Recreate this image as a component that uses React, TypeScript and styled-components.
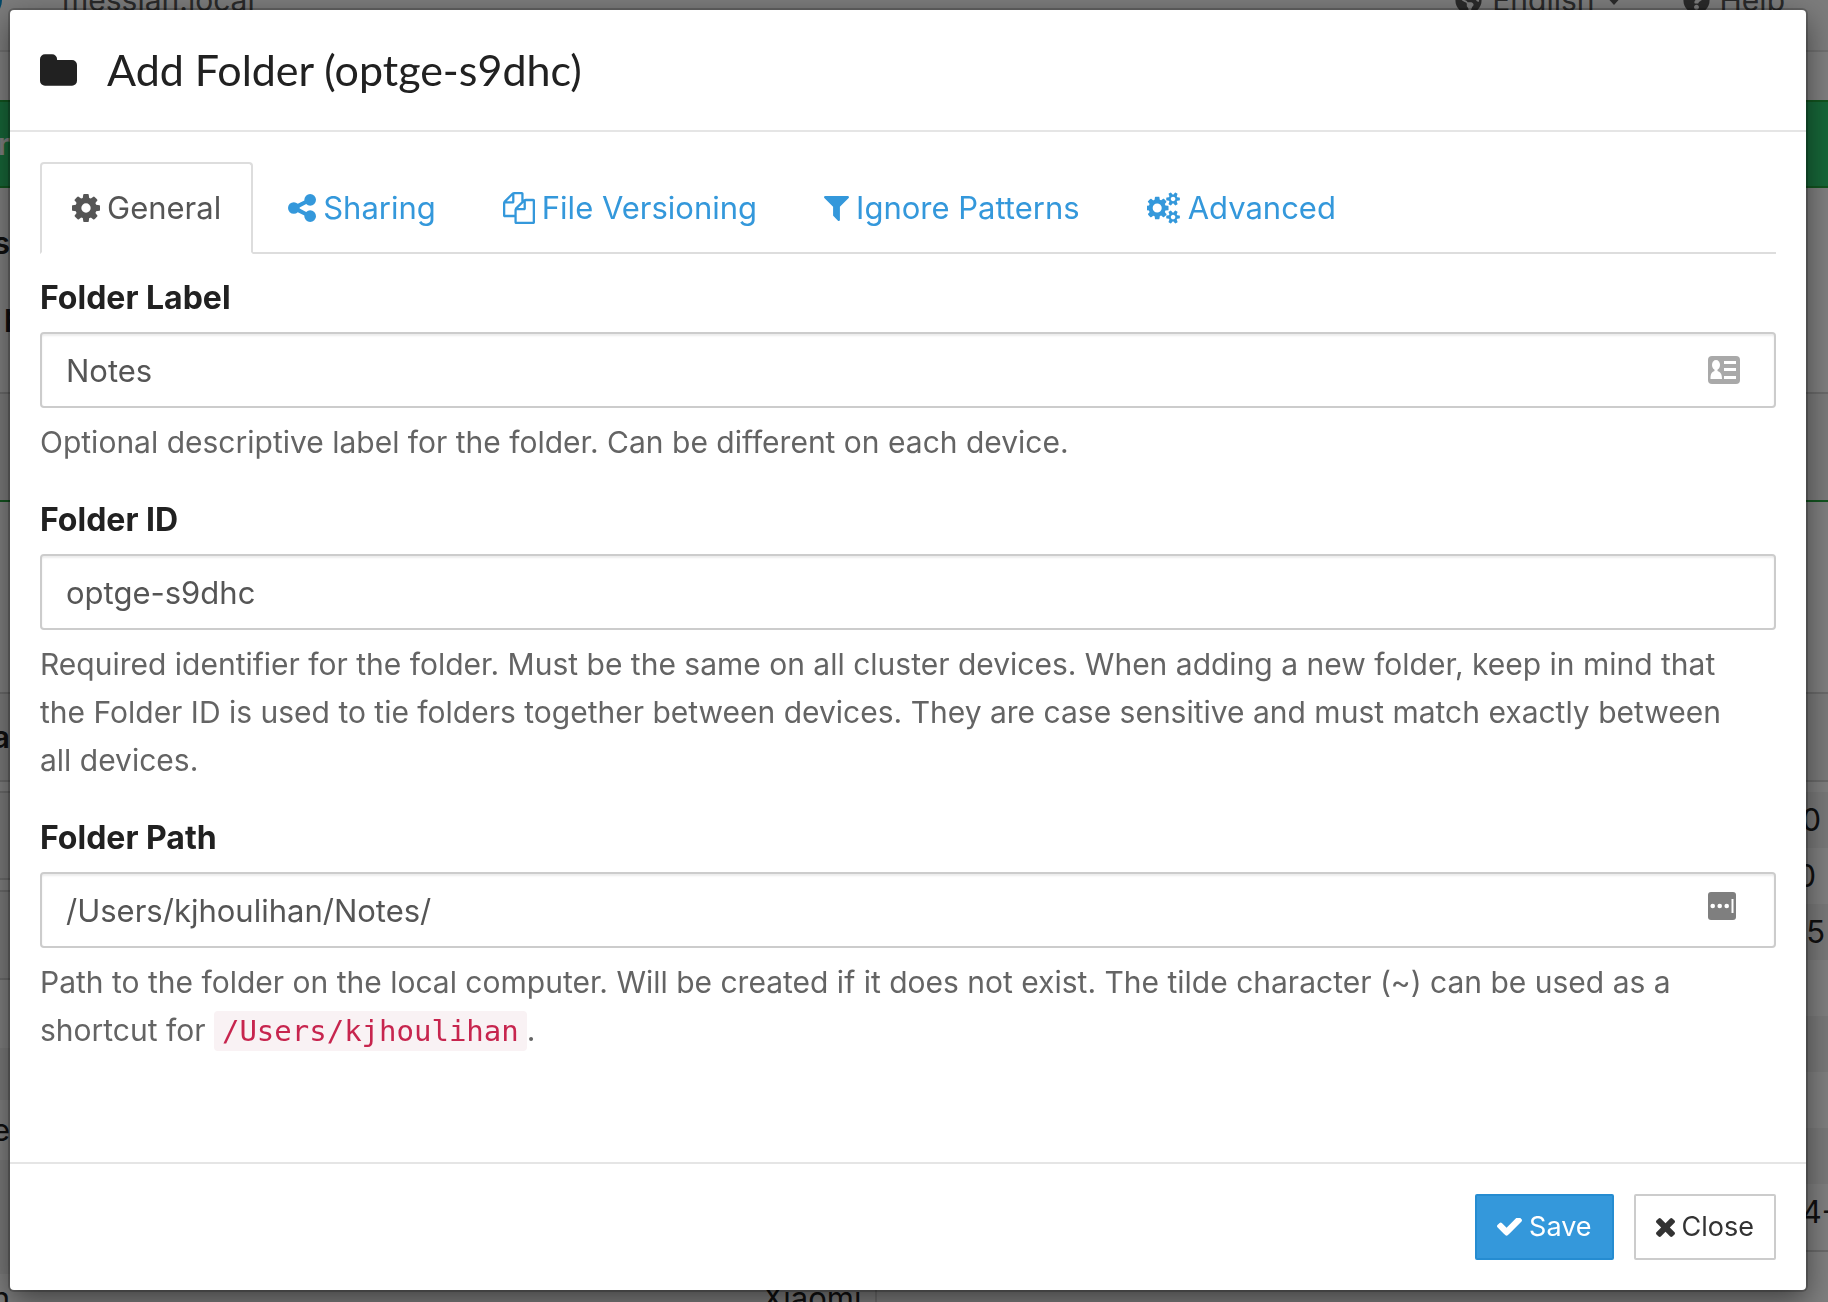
import React from "react";
import styled, { createGlobalStyle } from "styled-components";
import { FaGlobeAmericas, FaQuestionCircle } from "react-icons/fa";

const sans = `Inter, "Liberation Sans", sans-serif`;

const Global = createGlobalStyle`
  * { box-sizing: border-box; }
  body {
    margin: 0;
    background: #7f7f7f;
    color: #212121;
    font-family: ${sans};
    font-size: 31px;
    line-height: 48px;
  }
`;

/* ---------- dimmed page behind the dialog ---------- */

const Page = styled.div`
  position: fixed;
  inset: 0;
  overflow: hidden;
  background: #fff;
`;
const Backdrop = styled.div`
  position: fixed;
  inset: 0;
  background: rgba(0, 0, 0, 0.5);
`;
const NavBar = styled.div`
  display: flex;
  align-items: center;
  justify-content: space-between;
  height: 102px;
  margin-top: -50px;
  padding-right: 43px;
  background: #f8f8f8;
  border-bottom: 2px solid #e0e0e0;
  color: #555;
  font-size: 30px;
`;
const Brand = styled.div`
  display: flex;
  align-items: center;
  gap: 60px;
`;
const Disc = styled.span`
  width: 36px;
  height: 36px;
  margin-left: -34px;
  border-radius: 50%;
  background: #0891d1;
`;
const NavMenu = styled.div`
  display: flex;
  gap: 60px;
`;
const NavItem = styled.span`
  display: flex;
  align-items: center;
  gap: 10px;
`;
const Banner = styled.div`
  display: flex;
  align-items: center;
  height: 88px;
  margin-top: 48px;
  background: #2ecc71;
  border: solid #25a83e;
  border-width: 2px 0;
  color: #fff;
`;
const Columns = styled.div`
  display: flex;
`;
const Column = styled.div<{ $side: "left" | "right" }>`
  flex: ${p => (p.$side === "left" ? "0 0 48%" : "1")};
  border-right: ${p => (p.$side === "left" ? "2px solid #ddd" : "0")};
`;
const Row = styled.div<{ $h: number; $bg?: string; $line?: string }>`
  display: flex;
  align-items: center;
  justify-content: space-between;
  height: ${p => p.$h}px;
  background: ${p => p.$bg ?? "transparent"};
  border-bottom: ${p => (p.$line ? `2px solid ${p.$line}` : "0")};
`;
const Clip = styled.span<{ $bold?: boolean; $start?: boolean }>`
  display: flex;
  justify-content: ${p => (p.$start ? "flex-start" : "flex-end")};
  width: 10px;
  padding-left: ${p => (p.$start ? "4px" : "0")};
  font-weight: ${p => (p.$bold ? 600 : 400)};
`;
const Value = styled.span<{ $end?: number }>`
  margin-left: auto;
  margin-right: ${p => p.$end ?? 0}px;
`;

type RowData = { h: number; bg?: string; line?: string; clip?: string; start?: boolean; bold?: boolean; value?: string; end?: number };

const grey = "#d4d4d4";
const green = "#25a83e";
const stripe = "#f3f3f3";

const leftRows: RowData[] = [
  { h: 110, clip: "s", bold: true },
  { h: 34, clip: "p", start: true, bold: true },
  { h: 62, line: grey },
  { h: 108, bg: "#f5f5f5", line: green },
  { h: 192, line: grey },
  { h: 88, bg: "#f5f5f5", clip: "a", bold: true, line: grey },
  { h: 11, line: grey },
  { h: 87, bg: "#f5f5f5", line: grey },
  { h: 12, line: grey },
  { h: 88, bg: "#f5f5f5", line: grey },
  { h: 68 },
  { h: 52, bg: stripe },
  { h: 60, clip: "e" },
  { h: 114, bg: stripe },
  { h: 48, clip: "n", value: "Xiaomi", end: 14 },
];

const rightRows: RowData[] = [
  { h: 206, line: grey },
  { h: 108, bg: "#f5f5f5", line: green },
  { h: 192, line: grey },
  { h: 88, bg: "#f5f5f5", line: grey },
  { h: 10 },
  { h: 56, bg: stripe, value: "0", end: 7 },
  { h: 56, value: "0", end: 12 },
  { h: 56, bg: stripe, value: "5", end: 3 },
  { h: 56 },
  { h: 56, bg: stripe },
  { h: 56 },
  { h: 56, bg: stripe },
  { h: 56, value: "4-", end: -8 },
  { h: 12, line: grey },
  { h: 50 },
];

const renderRows = (rows: RowData[]) =>
  rows.map((r, i) => (
    <Row key={i} $h={r.h} $bg={r.bg} $line={r.line}>
      {r.clip && <Clip $bold={r.bold} $start={r.start}>{r.clip}</Clip>}
      {r.value && <Value $end={r.end}>{r.value}</Value>}
    </Row>
  ));

/* ---------- icons ---------- */

const Svg = styled.svg`
  display: block;
  flex: none;
  fill: currentColor;
`;

type IconData = { box: string; w: number; h: number; d: string };

const smallCog = (y: number) =>
  `M1856 ${y}v140q0 16-149 31-12 27-30 52 51 113 51 138 0 4-4 7-122 71-124 71-8 0-46-47t-52-68q-20 2-30 2t-30-2q-14 21-52 68t-46 47q-2 0-124-71-4-3-4-7 0-25 51-138-18-25-30-52-149-15-149-31v-140q0-16 149-31 13-29 30-52-51-113-51-138 0-4 4-7 4-2 35-20t59-34 30-16q8 0 46 46.5t52 67.5q20-2 30-2t30 2q51-71 92-112l6-2q4 0 124 70 4 3 4 7 0 25-51 138 17 23 30 52 149 15 149 31z`;

const icons: Record<string, IconData> = {
  caret: { box: "0 0 18 10", w: 18, h: 10, d: "M0 0h18l-9 10z" },
  folder: {
    box: "64 128 1664 1408", w: 37, h: 32,
    d: "M1728 608v704q0 92-66 158t-158 66h-1216q-92 0-158-66t-66-158v-960q0-92 66-158t158-66h320q92 0 158 66t66 158v32h672q92 0 158 66t66 158z",
  },
  cog: {
    box: "128 128 1536 1536", w: 28, h: 28,
    d: "M1152 896q0-106-75-181t-181-75-181 75-75 181 75 181 181 75 181-75 75-181zm512-109v222q0 12-8 23t-20 13l-185 28q-19 54-39 91 35 50 107 138 10 12 10 25t-9 23q-27 37-99 108t-94 71q-12 0-26-9l-138-108q-44 23-91 38-16 136-29 186-7 28-36 28h-222q-14 0-24.5-8.5t-11.5-21.5l-28-184q-49-16-90-37l-141 107q-10 9-25 9-14 0-25-11-126-114-165-168-7-10-7-23 0-12 8-23 15-21 51-66.5t54-70.5q-27-50-41-99l-183-27q-13-2-21-12.5t-8-23.5v-222q0-12 8-23t19-13l186-28q14-46 39-92-40-57-107-138-10-12-10-24 0-10 9-23 26-36 98.5-107.5t94.5-71.5q13 0 26 10l138 107q44-23 91-38 16-136 29-186 7-28 36-28h222q14 0 24.5 8.5t11.5 21.5l28 184q49 16 90 37l142-107q9-9 24-9 13 0 25 10 129 119 165 170 7 8 7 22 0 12-8 23-15 21-51 66.5t-54 70.5q26 50 41 98l183 28q13 2 21 12.5t8 23.5z",
  },
  share: {
    box: "128 128 1536 1536", w: 28, h: 28,
    d: "M1344 1024q133 0 226.5 93.5t93.5 226.5-93.5 226.5-226.5 93.5-226.5-93.5-93.5-226.5q0-12 2-34l-360-180q-92 86-218 86-133 0-226.5-93.5t-93.5-226.5 93.5-226.5 226.5-93.5q126 0 218 86l360-180q-2-22-2-34 0-133 93.5-226.5t226.5-93.5 226.5 93.5 93.5 226.5-93.5 226.5-226.5 93.5q-126 0-218-86l-360 180q2 22 2 34t-2 34l360 180q92-86 218-86z",
  },
  files: {
    box: "0 0 1792 1792", w: 32, h: 32,
    d: "M1696 384q40 0 68 28t28 68v1216q0 40-28 68t-68 28h-960q-40 0-68-28t-28-68v-288h-544q-40 0-68-28t-28-68v-672q0-40 20-88t48-76l408-408q28-28 76-48t88-20h416q40 0 68 28t28 68v328q68-40 128-40h416zm-544 213l-299 299h299v-299zm-640-384l-299 299h299v-299zm196 647l316-316v-416h-384v416q0 40-28 68t-68 28h-416v640h512v-256q0-40 20-88t48-76zm956 804v-1152h-384v416q0 40-28 68t-68 28h-416v640h896z",
  },
  filter: {
    box: "192 256 1408 1408", w: 25, h: 25,
    d: "M1595 295q17 41-14 70l-493 493v742q0 42-39 59-13 5-25 5-27 0-45-19l-256-256q-19-19-19-45v-486l-493-493q-31-29-14-70 17-39 59-39h1280q42 0 59 39z",
  },
  cogs: {
    box: "0 0 1920 1792", w: 34, h: 32,
    d: "M832 896q0-106-75-181t-181-75-181 75-75 181 75 181 181 75 181-75 75-181zm768 512q0-52-38-90t-90-38-90 38-38 90q0 53 37.5 90.5t90.5 37.5 90.5-37.5 37.5-90.5zm0-1024q0-52-38-90t-90-38-90 38-38 90q0 53 37.5 90.5t90.5 37.5 90.5-37.5 37.5-90.5zm-384 421v185q0 10-7 19.5t-16 10.5l-155 24q-11 35-32 76 34 48 90 115 7 11 7 20 0 12-7 19-23 30-82.5 89.5t-78.5 59.5q-11 0-21-7l-115-90q-37 19-77 31-11 108-23 155-7 24-30 24h-186q-11 0-20-7.5t-10-17.5l-23-153q-34-10-75-31l-118 89q-7 7-20 7-11 0-21-8-144-133-144-160 0-9 7-19 10-14 41-53t47-61q-23-44-35-82l-152-24q-10-1-17-9.5t-7-19.5v-185q0-10 7-19.5t16-10.5l155-24q11-35 32-76-34-48-90-115-7-11-7-20 0-12 7-20 22-30 82-89t79-59q11 0 21 7l115 90q34-18 77-32 11-108 23-154 7-24 30-24h186q11 0 20 7.5t10 17.5l23 153q34 10 75 31l118-89q8-7 20-7 11 0 21 8 144 133 144 160 0 8-7 19-12 16-42 54t-45 60q23 48 34 82l152 23q10 2 17 10.5t7 19.5z" + smallCog(1338) + smallCog(314),
  },
  check: {
    box: "121 434 1550 1088", w: 25, h: 18,
    d: "M1671 566q0 40-28 68l-724 724-136 136q-28 28-68 28t-68-28l-136-136-362-362q-28-28-28-68t28-68l136-136q28-28 68-28t68 28l294 295 656-657q28-28 68-28t68 28l136 136q28 28 28 68z",
  },
  times: {
    box: "302 366 1188 1188", w: 19, h: 19,
    d: "M1490 1322q0 40-28 68l-136 136q-28 28-68 28t-68-28l-294-294-294 294q-28 28-68 28t-68-28l-136-136q-28-28-28-68t28-68l294-294-294-294q-28-28-28-68t28-68l136-136q28-28 68-28t68 28l294 294 294-294q28-28 68-28t68 28l136 136q28 28 28 68t-28 68l-294 294 294 294q28 28 28 68z",
  },
};

const Icon = ({ name }: { name: keyof typeof icons }) => {
  const { box, w, h, d } = icons[name];
  return (
    <Svg viewBox={box} width={w} height={h} aria-hidden="true">
      <path d={d} />
    </Svg>
  );
};

const ContactIcon = () => (
  <svg width="32" height="28" viewBox="0 0 32 28" aria-hidden="true">
    <rect width="32" height="28" rx="4" fill="#a9a9a9" />
    <ellipse cx="8" cy="9" rx="4" ry="5" fill="#fff" />
    <path d="M6.500 12h3v3c3 1 4.500 3 4.500 8H2.500c0-5 1-7 4-8z" fill="#fff" />
    <path d="M16 5h12v3H16zM16 12h12v3H16zM16 20h12v3H16z" fill="#fff" />
  </svg>
);

const PasswordIcon = () => (
  <svg width="28" height="28" viewBox="0 0 28 28" aria-hidden="true">
    <rect width="28" height="28" rx="3" fill="#7f7f7f" />
    <circle cx="4.700" cy="14" r="2.300" fill="#fff" />
    <circle cx="11.700" cy="14" r="2.300" fill="#fff" />
    <circle cx="18.700" cy="14" r="2.300" fill="#fff" />
    <path d="M23.500 7h2v14h-2z" fill="#fff" />
  </svg>
);

/* ---------- dialog ---------- */

const Shell = styled.main`
  position: relative;
  padding: 10px 22px 12px 10px;
`;
const Dialog = styled.section`
  background: #fff;
  border-radius: 4px;
  box-shadow: 0 0 0 2px rgba(0, 0, 0, 0.2), 0 10px 30px rgba(0, 0, 0, 0.5);
`;
const Header = styled.header`
  display: flex;
  align-items: center;
  gap: 30px;
  padding: 30px;
  border-bottom: 2px solid #e5e5e5;
`;
const Title = styled.h1`
  margin: 0;
  font: 400 43px/60px Lato, "Open Sans", sans-serif;
`;
const Body = styled.form`
  padding: 30px 30px 78px;
`;
const Tabs = styled.nav`
  display: flex;
  gap: 3px;
  margin-bottom: 20px;
  border-bottom: 2px solid #ddd;
`;
const Tab = styled.a<{ $on?: boolean }>`
  display: flex;
  align-items: center;
  gap: 7px;
  margin-bottom: -2px;
  padding: 20px 30px;
  border: 2px solid ${p => (p.$on ? "#ddd" : "transparent")};
  border-bottom-color: ${p => (p.$on ? "#fff" : "transparent")};
  border-radius: 4px 4px 0 0;
  background: ${p => (p.$on ? "#fff" : "transparent")};
  color: ${p => (p.$on ? "#555" : "#3498db")};
  text-decoration: none;
`;
const Group = styled.div`
  margin-bottom: 30px;
`;
const Label = styled.label`
  display: block;
  margin-bottom: 10px;
  font-size: 32px;
  font-weight: 700;
`;
const Control = styled.div`
  position: relative;
`;
const Badge = styled.span<{ $top: number; $right: number }>`
  position: absolute;
  top: ${p => p.$top}px;
  right: ${p => p.$right}px;
  display: flex;
`;
const Input = styled.input`
  display: block;
  width: 100%;
  height: 76px;
  padding: 12px 24px;
  border: 2px solid #ccc;
  border-radius: 4px;
  background: #fff;
  box-shadow: inset 0 2px 2px rgba(0, 0, 0, 0.075);
  color: #555;
  font: inherit;
`;
const Help = styled.p`
  margin: 10px 0 0;
  padding-right: 16px;
  color: #646464;
  font-size: 30px;
`;
const Code = styled.code`
  display: inline-block;
  padding: 0 8px;
  border-radius: 4px;
  background: #f9f2f4;
  color: #c7254e;
  font: 29px/40px "DejaVu Sans Mono", monospace;
`;
const Footer = styled.footer`
  display: flex;
  justify-content: flex-end;
  gap: 20px;
  padding: 30px;
  border-top: 2px solid #e5e5e5;
`;
const Button = styled.button<{ $primary?: boolean }>`
  display: flex;
  align-items: center;
  gap: 7px;
  padding: 11px 20px;
  border: 2px solid ${p => (p.$primary ? "#258cd1" : "#ccc")};
  border-radius: 2px;
  background: ${p => (p.$primary ? "#3498db" : "#fff")};
  color: ${p => (p.$primary ? "#fff" : "#333")};
  font: 27px/40px ${sans};
`;

const tabs = [
  { id: "general", icon: "cog", label: "General" },
  { id: "sharing", icon: "share", label: "Sharing" },
  { id: "versioning", icon: "files", label: "File Versioning" },
  { id: "ignores", icon: "filter", label: "Ignore Patterns" },
  { id: "advanced", icon: "cogs", label: "Advanced" },
];

export default function App() {
  return (
    <>
      <Global />
      <Page>
        <NavBar>
          <Brand><Disc />messian.local</Brand>
          <NavMenu>
            <NavItem><FaGlobeAmericas size={27} />English<Icon name="caret" /></NavItem>
            <NavItem><FaQuestionCircle size={27} />Help</NavItem>
          </NavMenu>
        </NavBar>
        <Banner><Clip $bold>r</Clip></Banner>
        <Columns>
          <Column $side="left">{renderRows(leftRows)}</Column>
          <Column $side="right">{renderRows(rightRows)}</Column>
        </Columns>
      </Page>
      <Backdrop />
      <Shell>
        <Dialog role="dialog" aria-labelledby="title">
          <Header>
            <Icon name="folder" />
            <Title id="title">Add Folder (optge-s9dhc)</Title>
          </Header>
          <Body>
            <Tabs>
              {tabs.map((t, i) => (
                <Tab key={t.id} href={`#${t.id}`} $on={i === 0}>
                  <Icon name={t.icon} />{t.label}
                </Tab>
              ))}
            </Tabs>
            <Group>
              <Label htmlFor="folderLabel">Folder Label</Label>
              <Control>
                <Input id="folderLabel" type="text" defaultValue="Notes" />
                <Badge $top={24} $right={36}><ContactIcon /></Badge>
              </Control>
              <Help>Optional descriptive label for the folder. Can be different on each device.</Help>
            </Group>
            <Group>
              <Label htmlFor="folderID">Folder ID</Label>
              <Input id="folderID" type="text" defaultValue="optge-s9dhc" />
              <Help>
                Required identifier for the folder. Must be the same on all cluster devices. When adding a new folder,
                keep in mind that the Folder ID is used to tie folders together between devices. They are case
                sensitive and must match exactly between all devices.
              </Help>
            </Group>
            <Group>
              <Label htmlFor="folderPath">Folder Path</Label>
              <Control>
                <Input id="folderPath" type="text" defaultValue="/Users/kjhoulihan/Notes/" />
                <Badge $top={20} $right={40}><PasswordIcon /></Badge>
              </Control>
              <Help>
                Path to the folder on the local computer. Will be created if it does not exist. The tilde character
                (~) can be used as a shortcut for <Code>/Users/kjhoulihan</Code>.
              </Help>
            </Group>
          </Body>
          <Footer>
            <Button type="button" $primary><Icon name="check" />Save</Button>
            <Button type="button"><Icon name="times" />Close</Button>
          </Footer>
        </Dialog>
      </Shell>
    </>
  );
}
